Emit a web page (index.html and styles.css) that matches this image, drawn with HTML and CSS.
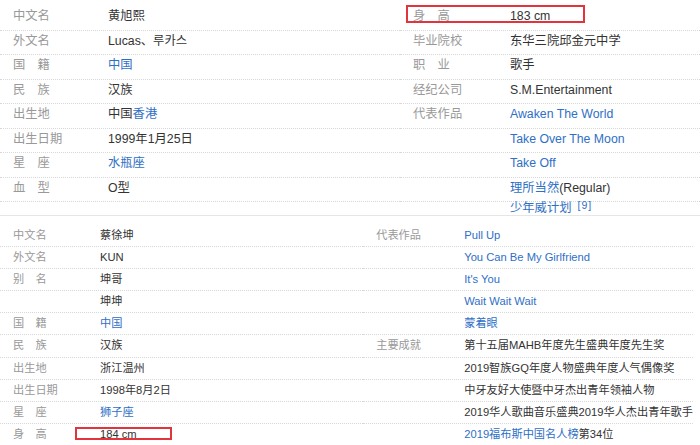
FILE: index.html
```html
<!DOCTYPE html>
<html lang="zh">
<head>
<meta charset="utf-8">
<link rel="stylesheet" href="styles.css">
</head>
<body>
<div class="panel top">
  <div class="col left">
    <div class="row"><span class="lab">中文名</span><span class="val">黄旭熙</span></div>
    <div class="row"><span class="lab">外文名</span><span class="val">Lucas、루카스</span></div>
    <div class="row"><span class="lab">国<i class="gap"></i>籍</span><span class="val link">中国</span></div>
    <div class="row"><span class="lab">民<i class="gap"></i>族</span><span class="val">汉族</span></div>
    <div class="row"><span class="lab">出生地</span><span class="val">中国<span class="link">香港</span></span></div>
    <div class="row"><span class="lab">出生日期</span><span class="val">1999年1月25日</span></div>
    <div class="row"><span class="lab">星<i class="gap"></i>座</span><span class="val link">水瓶座</span></div>
    <div class="row"><span class="lab">血<i class="gap"></i>型</span><span class="val">O型</span></div>
  </div>
  <div class="col right">
    <div class="row boxed"><span class="lab">身<i class="gap"></i>高</span><span class="val">183 cm</span><div class="mark mark-top"></div></div>
    <div class="row"><span class="lab">毕业院校</span><span class="val">东华三院邱金元中学</span></div>
    <div class="row"><span class="lab">职<i class="gap"></i>业</span><span class="val">歌手</span></div>
    <div class="row"><span class="lab">经纪公司</span><span class="val">S.M.Entertainment</span></div>
    <div class="row"><span class="lab">代表作品</span><span class="val link">Awaken The World</span></div>
    <div class="row"><span class="lab"></span><span class="val link">Take Over The Moon</span></div>
    <div class="row"><span class="lab"></span><span class="val link">Take Off</span></div>
    <div class="row"><span class="lab"></span><span class="val"><span class="link">理所当然</span>(Regular)</span></div>
    <div class="row last"><span class="lab"></span><span class="val link">少年威计划<sup class="ref">[9]</sup></span></div>
  </div>
</div>
<div class="divider"></div>
<div class="panel bottom">
  <div class="col left">
    <div class="row"><span class="lab">中文名</span><span class="val">蔡徐坤</span></div>
    <div class="row"><span class="lab">外文名</span><span class="val">KUN</span></div>
    <div class="row"><span class="lab">别<i class="gap"></i>名</span><span class="val">坤哥</span></div>
    <div class="row"><span class="lab"></span><span class="val">坤坤</span></div>
    <div class="row"><span class="lab">国<i class="gap"></i>籍</span><span class="val link">中国</span></div>
    <div class="row"><span class="lab">民<i class="gap"></i>族</span><span class="val">汉族</span></div>
    <div class="row"><span class="lab">出生地</span><span class="val">浙江温州</span></div>
    <div class="row"><span class="lab">出生日期</span><span class="val">1998年8月2日</span></div>
    <div class="row"><span class="lab">星<i class="gap"></i>座</span><span class="val link">狮子座</span></div>
    <div class="row boxed"><span class="lab">身<i class="gap"></i>高</span><span class="val">184 cm</span><div class="mark mark-bottom"></div></div>
  </div>
  <div class="col right">
    <div class="row"><span class="lab">代表作品</span><span class="val link">Pull Up</span></div>
    <div class="row"><span class="lab"></span><span class="val link">You Can Be My Girlfriend</span></div>
    <div class="row"><span class="lab"></span><span class="val link">It's You</span></div>
    <div class="row"><span class="lab"></span><span class="val link">Wait Wait Wait</span></div>
    <div class="row"><span class="lab"></span><span class="val link">蒙着眼</span></div>
    <div class="row"><span class="lab">主要成就</span><span class="val">第十五届MAHB年度先生盛典年度先生奖</span></div>
    <div class="row"><span class="lab"></span><span class="val">2019智族GQ年度人物盛典年度人气偶像奖</span></div>
    <div class="row"><span class="lab"></span><span class="val">中牙友好大使暨中牙杰出青年领袖人物</span></div>
    <div class="row"><span class="lab"></span><span class="val">2019华人歌曲音乐盛典2019华人杰出青年歌手</span></div>
    <div class="row"><span class="lab"></span><span class="val"><span class="link">2019福布斯中国名人榜</span>第34位</span></div>
  </div>
</div>
</body>
</html>
```

FILE: styles.css
```css
html, body {
  margin: 0;
  padding: 0;
  background: #fff;
  overflow: hidden;
}
body {
  width: 700px;
  height: 445px;
  font-family: "Liberation Sans", "Noto Sans CJK SC", sans-serif;
  color: #333;
}
.panel {
  display: flex;
}
.top {
  padding-top: 6.2px;
  height: 208.8px;
  font-size: 12.3px;
}
.top .left { width: 400px; }
.top .right { flex: 1; }
.top .row {
  line-height: 20px;
  padding-bottom: 3.5px;
}
.top .left .lab { width: 108px; }
.top .right .lab { width: 110px; }
.top .row.last {
  line-height: 12px;
  padding-bottom: 0;
  border-bottom: none;
}
.divider {
  height: 1px;
  background: #e6e6e6;
}
.bottom {
  padding-top: 9px;
  font-size: 11.2px;
  width: 693px;
}
.bottom .left { width: 364px; }
.bottom .right { flex: 1; }
.bottom .row {
  line-height: 20px;
  padding-bottom: 1.1px;
}
.bottom .left .lab { width: 100px; }
.bottom .right .lab { width: 101px; }
.row {
  display: flex;
  border-bottom: 1px dotted #d8d8d8;
  white-space: nowrap;
  position: relative;
}
.lab {
  flex: none;
  padding-left: 13px;
  box-sizing: border-box;
  color: #999;
}
.gap {
  display: inline-block;
  width: 1em;
}
.val { color: #333; }
.link, .val.link { color: #2f6fc6; }
.ref {
  font-size: 10.5px;
  margin-left: 6px;
  letter-spacing: 1px;
  vertical-align: 3px;
  line-height: 0;
}
.mark {
  position: absolute;
  border: 2px solid #e2343c;
  box-sizing: border-box;
}
.mark-top {
  left: 6px;
  top: -1.2px;
  width: 179px;
  height: 18px;
}
.mark-bottom {
  left: 75px;
  top: 3px;
  width: 97px;
  height: 13.5px;
}
```
